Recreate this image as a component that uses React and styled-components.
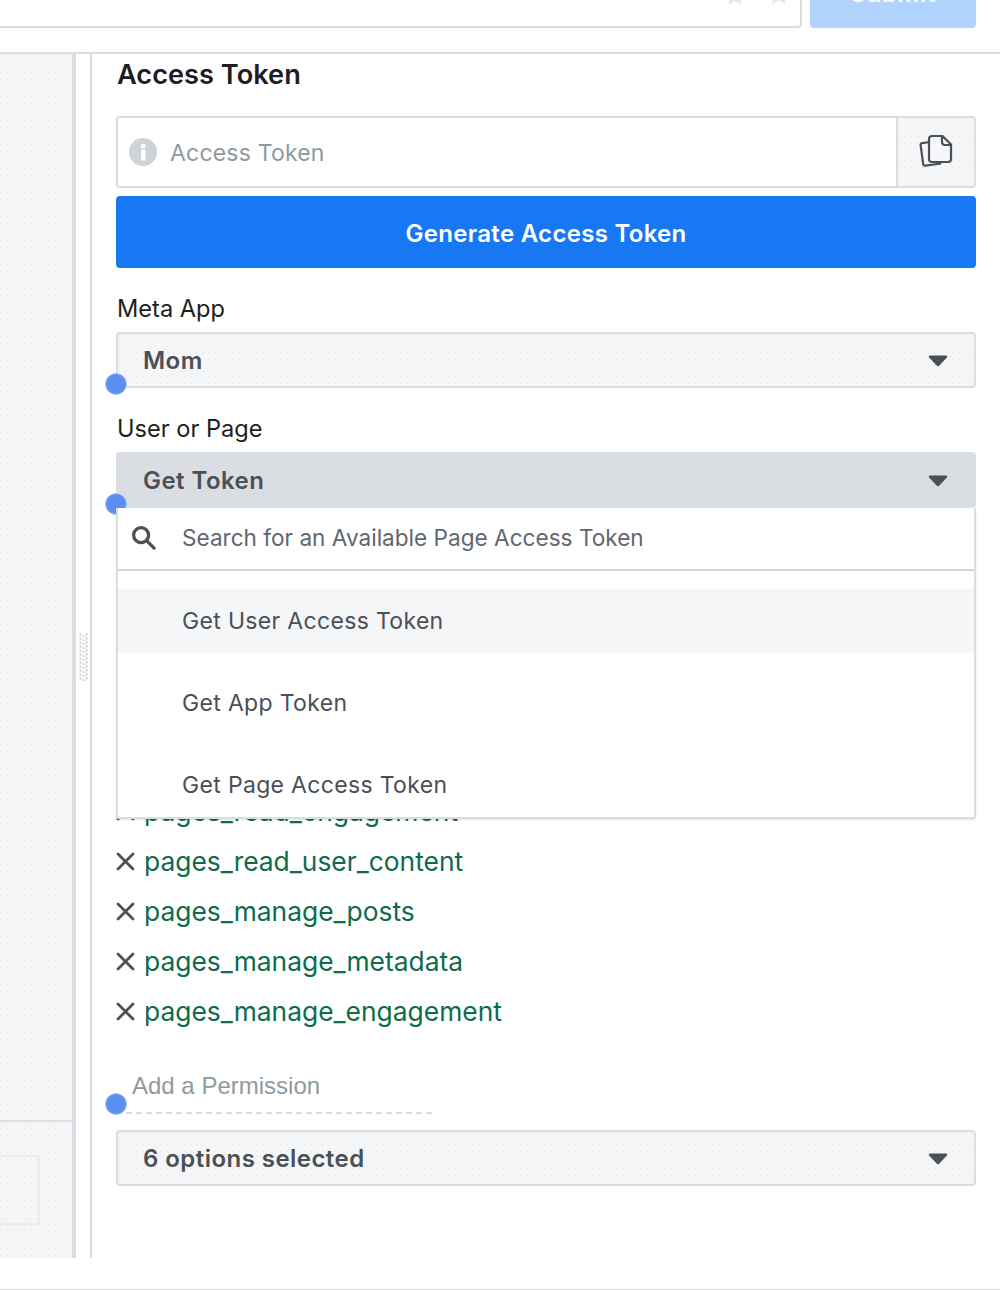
import React from 'react';
import styled, { createGlobalStyle } from 'styled-components';

const dots = `radial-gradient(circle at 1px 1px, rgba(190,195,205,.12) .7px, transparent 1px)`;

const Global = createGlobalStyle`
  html, body { margin: 0; padding: 0; background: #fff; }
  body { font-family: Inter, "Liberation Sans", sans-serif; color: #1c1e21; }
  * { box-sizing: border-box; }
`;
const Page = styled.div`width: 1000px; height: 1290px; display: flex; flex-direction: column; overflow: hidden;`;
const TopBar = styled.header`
  height: 54px; flex: none; display: flex; align-items: flex-start; gap: 8px; padding-right: 24px;
  border-bottom: 2px solid #dadde1; overflow: hidden;
`;
const TopInput = styled.div`
  flex: 1; height: 28px; display: flex; justify-content: flex-end; align-items: flex-end; gap: 21px; padding: 0 9px 21px 0;
  border: 2px solid #dadde1; border-top: none; border-left: none; border-radius: 0 0 4px 0;
`;
const StarIcon = styled.svg`flex: none; margin-bottom: -1px;`;
const SubmitButton = styled.div`
  width: 166px; height: 28px; background: #b0d4fd; border-radius: 0 0 4px 4px; color: #fff;
  font-size: 24px; font-weight: 700; letter-spacing: .5px; display: flex; justify-content: center; align-items: flex-end;
  line-height: 28px; padding-bottom: 20px;
`;
const Body = styled.div`height: 1204px; flex: none; display: flex;`;
const Footer = styled.footer`height: 32px; flex: none; border-bottom: 1px solid #dadde1;`;
const LeftPane = styled.aside`
  width: 72px; flex: none; background-color: #f5f6f7; background-image: ${dots}; background-size: 6px 6px;
  display: flex; flex-direction: column;
`;
const LeftTop = styled.div`height: 1068px; flex: none; border-bottom: 2px solid #dadde1;`;
const LeftCard = styled.div`
  width: 40px; height: 70px; margin-top: 33px; border: 2px solid #e9ebee; border-left: none; border-radius: 0 3px 3px 0;
`;
const Splitter = styled.div`
  width: 20px; flex: none; border-left: 4px solid #dadde1; border-right: 2px solid #dadde1;
  display: flex; align-items: flex-start; justify-content: center; padding-top: 579px;
`;
const Handle = styled.div`
  width: 9px; height: 48px;
  background-image:
    radial-gradient(circle at 1.5px 1.5px, #d8dbe0 1.2px, transparent 1.5px),
    radial-gradient(circle at 4.5px 3.5px, #d8dbe0 1.2px, transparent 1.5px);
  background-size: 6px 4px;
`;
const Main = styled.main`flex: 1; padding: 0 24px; display: flex; flex-direction: column;`;
const Title = styled.h2`
  margin: 3px 0 -1px 1px; font-size: 27.2px; line-height: 36px; font-weight: 600; color: #1c1e21;
`;
const TokenRow = styled.div`
  margin-top: 24px; height: 72px; display: flex; border: 2px solid #dadde1; border-radius: 3px 4px 4px 3px;
`;
const TokenInput = styled.div`
  flex: 1; display: flex; align-items: center; gap: 13px; padding: 0 0 0 11px;
  font-size: 23px; letter-spacing: .2px; color: #8d9a9e;
`;
const PlaceholderText = styled.span`padding-top: 2px;`;
const CopyButton = styled.div`
  width: 78px; flex: none; background-color: #f5f6f7; background-image: ${dots}; background-size: 6px 6px;
  border-left: 2px solid #dadde1; display: flex; align-items: center; justify-content: center;
`;
const Primary = styled.div`
  margin-top: 8px; height: 72px; padding-top: 2px; background: #1877f2; border-radius: 4px; color: #fff; font-weight: 600;
  font-size: 24px; letter-spacing: .3px; display: flex; align-items: center; justify-content: center;
`;
const Label = styled.div`
  font-size: 23.6px; line-height: 30px; color: #1c1e21; margin-left: 1px;
`;
const Field = styled.div`margin-top: ${p => p.$top}px; display: flex; flex-direction: column; gap: 8px;`;
const SelectWrap = styled.div`position: relative;`;
const Select = styled.div`
  height: 56px; display: flex; align-items: center; justify-content: space-between; padding: 1px 26px 0 25px;
  border: 2px solid #dadde1; border-radius: 4px; font-size: 24px; font-weight: 600; letter-spacing: .45px; color: #4b4f56;
  background-color: ${p => p.$open ? '#dadde1' : '#f5f6f7'};
  background-image: ${p => p.$open ? 'none' : dots}; background-size: 6px 6px;
`;
const Dot = styled.span`
  position: absolute; left: -11px; bottom: -7px; width: 22px; height: 22px; border-radius: 50%;
  background: #5b8ff0; border: 1px solid #a9c6f7;
`;
const Menu = styled.div`
  position: absolute; z-index: 2; left: 0; right: 0; top: 56px; height: 311px; background: #fff;
  border: 2px solid #dadde1; border-top: none; border-radius: 0 0 3px 3px; box-shadow: 0 1px 2px rgba(0,0,0,.12);
`;
const MenuSearch = styled.div`
  height: 63px; display: flex; align-items: center; gap: 26px; padding: 0 0 2px 13px; border-bottom: 2px solid #d3d6db;
  font-size: 22.6px; color: #606770;
`;
const MenuList = styled.div`padding-top: 18px; display: flex; flex-direction: column; gap: 18px;`;
const MenuItem = styled.div`
  height: 64px; display: flex; align-items: center; padding-left: 64px;
  font-size: 23px; letter-spacing: .33px; color: #4b4f56; background: ${p => p.$active ? '#f5f6f7' : 'transparent'};
`;
const Perms = styled.ul`list-style: none; margin: 228px 0 0; padding: 0; display: flex; flex-direction: column;`;
const Perm = styled.li`
  height: 50px; display: flex; align-items: center; gap: 9px; font-size: 26.4px; color: #0e6b4c;
`;
const AddWrap = styled.div`
  position: relative; margin-top: 13px; width: 316px; height: 65px; border-bottom: 2px dashed #dadde1;
  padding: 23px 0 0 16px; font-family: "Liberation Sans", Arial, sans-serif; font-size: 24px; color: #8d9a9e; line-height: 28px;
`;
const AddDot = styled(Dot)`bottom: -3px;`;

const Caret = () => (
  <svg width="20" height="12" viewBox="0 0 20 12"><path d="M2 .6h16c1.2 0 1.7 1.2.9 2l-7.5 8a2 2 0 0 1-2.8 0l-7.5-8c-.8-.8-.3-2 .9-2z" fill="#4b4f56"/></svg>
);
const Info = () => (
  <svg width="28" height="28" viewBox="0 0 28 28"><circle cx="14" cy="14" r="14" fill="#cfd2d6"/><rect x="12" y="11.5" width="4.5" height="11" fill="#fff"/><rect x="12" y="6" width="4.5" height="4" rx="1" fill="#fff"/></svg>
);
const Copy = () => (
  <svg width="34" height="34" viewBox="0 0 34 34" fill="none" stroke="#4b4f56" strokeWidth="2.2" strokeLinejoin="round"><path d="M11 7 3 8.2c-1 .2-1.6 1-1.4 2l2.6 19c.1 1 1 1.6 2 1.5l16-2.2" /><path d="M13 1h10.5L32 9.5V24a3 3 0 0 1-3 3H13a3 3 0 0 1-3-3V4a3 3 0 0 1 3-3z" fill="#f5f6f7"/><path d="M23 1v6a3 3 0 0 0 3 3h6"/></svg>
);
const Search = () => (
  <svg width="25" height="25" viewBox="0 0 26 26" fill="none" stroke="#4b4f56" strokeWidth="3.4" strokeLinecap="round"><circle cx="10.5" cy="10.5" r="7.8"/><path d="M16.5 16.5 24 24"/></svg>
);
const Cross = () => (
  <svg width="19" height="19" viewBox="0 0 19 19" fill="none" stroke="#4b4f56" strokeWidth="2.8" strokeLinecap="round"><path d="M2 2l15 15M17 2 2 17"/></svg>
);
const Star = ({ size }) => (
  <StarIcon width={size} height={size} viewBox="0 0 24 24"><path d="M12 1l3.4 7.3 7.6 1-5.6 5.3 1.5 7.9-6.9-3.9-6.9 3.9 1.5-7.9L1 9.3l7.6-1z" fill="#e6e8eb"/></StarIcon>
);

const perms = ['pages_show_list', 'pages_read_engagement', 'pages_read_user_content', 'pages_manage_posts', 'pages_manage_metadata', 'pages_manage_engagement'];

export default function App() {
  return (
    <Page>
      <Global />
      <TopBar>
        <TopInput>
          <Star size={22} />
          <Star size={24} />
        </TopInput>
        <SubmitButton>Submit</SubmitButton>
      </TopBar>
      <Body>
        <LeftPane>
          <LeftTop />
          <LeftCard />
        </LeftPane>
        <Splitter><Handle /></Splitter>
        <Main>
          <Title>Access Token</Title>
          <TokenRow>
            <TokenInput><Info /><PlaceholderText>Access Token</PlaceholderText></TokenInput>
            <CopyButton><Copy /></CopyButton>
          </TokenRow>
          <Primary>Generate Access Token</Primary>
          <Field $top={26}>
            <Label>Meta App</Label>
            <SelectWrap><Select>Mom<Caret /></Select><Dot /></SelectWrap>
          </Field>
          <Field $top={26}>
            <Label>User or Page</Label>
            <SelectWrap>
              <Select $open>Get Token<Caret /></Select>
              <Dot />
              <Menu>
                <MenuSearch><Search />Search for an Available Page Access Token</MenuSearch>
                <MenuList>
                  <MenuItem $active>Get User Access Token</MenuItem>
                  <MenuItem>Get App Token</MenuItem>
                  <MenuItem>Get Page Access Token</MenuItem>
                </MenuList>
              </Menu>
            </SelectWrap>
          </Field>
          <Perms>
            {perms.map(p => <Perm key={p}><Cross />{p}</Perm>)}
          </Perms>
          <AddWrap>Add a Permission<AddDot /></AddWrap>
          <Field $top={16}>
            <Select>6 options selected<Caret /></Select>
          </Field>
        </Main>
      </Body>
      <Footer />
    </Page>
  );
}
